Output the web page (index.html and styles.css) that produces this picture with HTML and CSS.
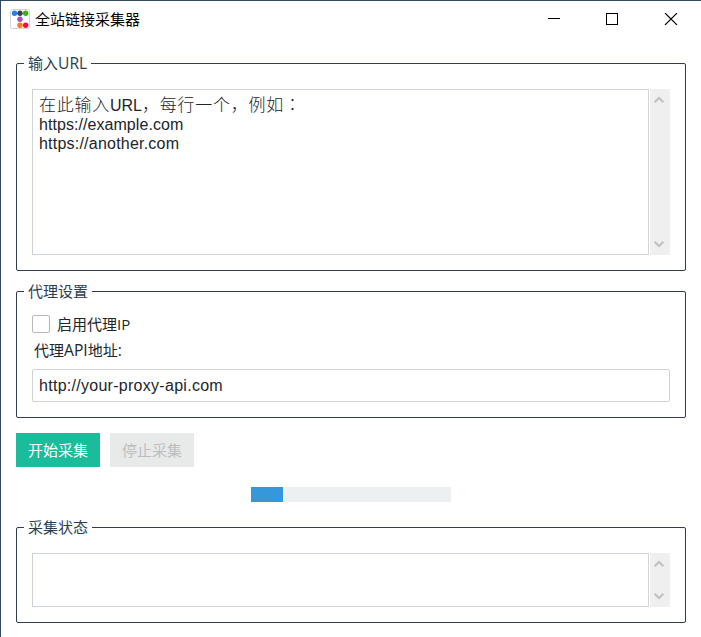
FILE: index.html
```html
<!DOCTYPE html>
<html lang="zh-CN">
<head>
<meta charset="utf-8">
<title>全站链接采集器</title>
<link rel="stylesheet" href="styles.css">
</head>
<body>
<div class="window">
  <header class="titlebar">
    <svg class="app-icon" width="20" height="20" viewBox="0 0 20 20">
      <rect x=".5" y=".5" width="19" height="19" rx="2" fill="#fff" stroke="#d4d4d4"/>
      <circle cx="4.5" cy="4.3" r="2.7" fill="#2680eb"/>
      <circle cx="10" cy="4.3" r="2.7" fill="#3c4043"/>
      <circle cx="15.7" cy="4.3" r="2.7" fill="#3cb010"/>
      <circle cx="10" cy="10.3" r="2.7" fill="#9b59b6"/>
      <circle cx="10" cy="16.3" r="2.7" fill="#ff7a14"/>
      <circle cx="15.7" cy="16.3" r="2.7" fill="#ff0a3c"/>
    </svg>
    <h1 class="title">全站链接采集器</h1>
    <svg class="controls" width="130" height="12" viewBox="0 0 130 12" fill="none" stroke="#000">
      <path d="M0 5.5H12" shape-rendering="crispEdges"/>
      <rect x="58.5" y=".5" width="11" height="11" shape-rendering="crispEdges"/>
      <path d="M117 0L129 12M129 0L117 12" stroke-width="1.1"/>
    </svg>
  </header>
  <main class="content">
    <section class="group group-input">
      <h2 class="legend">输入<span class="latin">URL</span></h2>
      <div class="edit">
        <div class="text"><span class="wide">在此输入</span>URL<span class="wide">，每行一个，例如<span class="colon" lang="zh-TW">：</span></span><br><span class="url-a">https://example.com</span><br><span class="url-b">https://another.com</span></div>
        <div class="scrollbar">
          <svg width="10" height="8" viewBox="0 0 10 8"><path d="M.7 6.2L5 1.9L9.3 6.2"/></svg>
          <svg width="10" height="8" viewBox="0 0 10 8"><path d="M.7 1.8L5 6.1L9.3 1.8"/></svg>
        </div>
      </div>
    </section>
    <section class="group group-proxy">
      <h2 class="legend">代理设置</h2>
      <div class="check"><span class="box"></span>启用代理IP</div>
      <div class="label">代理<span class="latin">API</span>地址<span class="latin">:</span></div>
      <div class="field">http://your-proxy-api.com</div>
    </section>
    <div class="buttons">
      <div class="button start">开始采集</div>
      <div class="button stop">停止采集</div>
    </div>
    <div class="progress"><div class="bar"></div></div>
    <section class="group group-status">
      <h2 class="legend">采集状态</h2>
      <div class="edit">
        <div class="text"></div>
        <div class="scrollbar">
          <svg width="10" height="8" viewBox="0 0 10 8"><path d="M.7 6.2L5 1.9L9.3 6.2"/></svg>
          <svg width="10" height="8" viewBox="0 0 10 8"><path d="M.7 1.8L5 6.1L9.3 1.8"/></svg>
        </div>
      </div>
    </section>
  </main>
</div>
</body>
</html>
```
FILE: styles.css
```css
* { box-sizing: border-box; }
body {
  margin: 0;
  font: 15px/20px "Open Sans", "Noto Sans CJK SC", sans-serif;
  color: #212529;
  background: #fff;
}
.window {
  height: 637px;
  border-top: 1px solid #34495e;
  border-left: 1px solid #34495e;
  overflow: hidden;
}
.titlebar {
  height: 38px;
  display: flex;
  align-items: center;
  padding: 0 23px 2px 9px;
}
.title {
  height: 20px;
  margin: 0 0 0 5px;
  font-size: 15px;
  font-weight: 400;
  line-height: 20px;
  color: #000;
}
.controls { margin-left: auto; }
.content {
  display: flex;
  flex-direction: column;
  padding: 24px 15px 0;
}
.group {
  border: 1px solid #2c3e50;
  border-radius: 2px;
  padding: 25px 15px 15px;
}
.group-input { height: 208px; }
.group-proxy { height: 127px; margin-top: 20px; padding-top: 23px; }
.group-status { height: 96px; }
.legend {
  width: max-content;
  height: 20px;
  margin: -36px 0 16px -8px;
  padding: 0 4px;
  font-size: 15px;
  font-weight: 400;
  line-height: 20px;
  color: #2c3e50;
  background: #fff;
}
.latin { font-size: 15.6px; line-height: 1; }
.edit { display: flex; gap: 1px; height: 166px; }
.group-status .edit { height: 54px; }
.text {
  flex: 1;
  border: 1px solid #ced4da;
  padding: 5px 6px;
  font: 16px/19px "Liberation Sans", "Noto Sans CJK SC", sans-serif;
  white-space: nowrap;
}
.wide {
  font-size: 17px;
  letter-spacing: .75px;
  font-weight: 300;
  line-height: 1;
}
.colon { font-family: "Noto Sans CJK TC", sans-serif; }
.url-a { letter-spacing: .06px; }
.url-b { letter-spacing: .22px; }
.scrollbar {
  width: 20px;
  background: #efefef;
  display: flex;
  flex-direction: column;
  justify-content: space-between;
  align-items: center;
  padding: 7px 2px 7px 0;
}
.scrollbar path { fill: none; stroke: #bfbfbf; stroke-width: 2; }
.group-proxy .legend { margin-top: -34px; margin-bottom: 13px; }
.check { display: flex; align-items: center; height: 20px; }
.box {
  width: 18px;
  height: 18px;
  margin-right: 7px;
  border: 1px solid #b9b9b9;
  border-radius: 2px;
}
.label { margin: 6px 0 9px 2px; height: 20px; }
.field {
  height: 33px;
  border: 1px solid #ced4da;
  border-radius: 2px;
  padding: 0 6px;
  font: 16px/31px "Liberation Sans", sans-serif;
  letter-spacing: .28px;
}
.buttons { display: flex; gap: 10px; margin-top: 15px; }
.button {
  width: 84px;
  height: 34px;
  line-height: 34px;
  text-align: center;
}
.start { background: #1abc9c; color: #fff; }
.stop { background: #e8eaea; color: #bdbdbd; }
.progress {
  width: 200px;
  height: 15px;
  margin: 20px auto 25px;
  background: #ecf0f1;
}
.bar { width: 32px; height: 15px; background: #3498db; }
```
